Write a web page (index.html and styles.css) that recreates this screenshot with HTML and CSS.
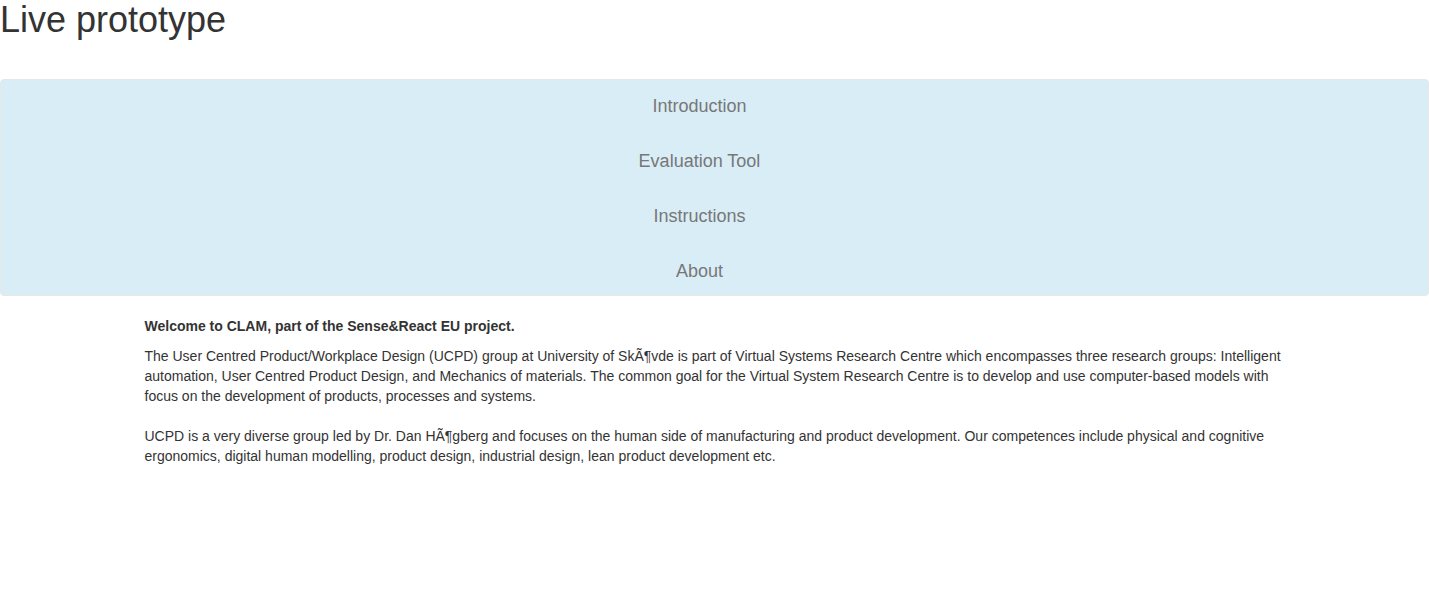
FILE: index.html
```html
<!DOCTYPE html>
<html>
<head>
<meta charset="utf-8">
<title>Live prototype</title>
<link rel="stylesheet" href="styles.css">
</head>
<body>
<h1 class="title">Live prototype</h1>
<nav class="menu">
  <ul class="menu-list">
    <li class="menu-item"><a class="menu-link" href="#">Introduction</a></li>
    <li class="menu-item"><a class="menu-link" href="#">Evaluation Tool</a></li>
    <li class="menu-item"><a class="menu-link" href="#">Instructions</a></li>
    <li class="menu-item"><a class="menu-link" href="#">About</a></li>
  </ul>
</nav>
<main class="container">
  <p class="lead-line"><strong>Welcome to CLAM, part of the Sense&amp;React EU project.</strong></p>
  <p class="body-text">The User Centred Product/Workplace Design (UCPD) group at University of SkÃ¶vde is part of Virtual Systems Research Centre which encompasses three research groups: Intelligent automation, User Centred Product Design, and Mechanics of materials. The common goal for the Virtual System Research Centre is to develop and use computer-based models with focus on the development of products, processes and systems.<br><br>UCPD is a very diverse group led by Dr. Dan HÃ¶gberg and focuses on the human side of manufacturing and product development. Our competences include physical and cognitive ergonomics, digital human modelling, product design, industrial design, lean product development etc.</p>
</main>
</body>
</html>
```
FILE: styles.css
```css
* { box-sizing: border-box; }
html, body { margin: 0; padding: 0; }
body {
  font-family: "Liberation Sans", Arial, Helvetica, sans-serif;
  font-size: 14px;
  line-height: 20px;
  color: #333;
  background: #fff;
}
.title {
  margin: 0 0 39px 0;
  font-size: 36px;
  font-weight: 500;
  line-height: 1.1;
  color: #333;
}
.menu {
  width: 1429px;
  background: #d9edf7;
  border: 1px solid #e7e7e7;
  border-radius: 4px;
}
.menu-list {
  list-style: none;
  margin: 0;
  padding: 0 30px 0 0;
  display: flex;
  flex-direction: column;
  gap: 5px;
}
.menu-link {
  display: block;
  text-align: center;
  font-size: 18px;
  line-height: 25px;
  padding: 14px 15px 11px;
  color: #777;
  text-decoration: none;
}
.container {
  width: 1170px;
  margin: 0 auto;
  padding: 20px 15px 0;
}
.container p { margin: 0 0 10px; }
```
